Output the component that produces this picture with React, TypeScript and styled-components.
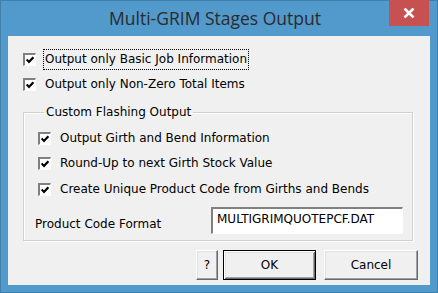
import React from "react";
import styled, { createGlobalStyle } from "styled-components";

const Global = createGlobalStyle`
  html, body { margin: 0; padding: 0; background: #fff; }
  * { box-sizing: border-box; }
`;

const Frame = styled.div`
  width: 438px;
  height: 293px;
  background: #529acb;
  border: 1px solid #3f80ad;
  display: flex;
  flex-direction: column;
  padding: 0 7px 7px;
`;

const TitleBar = styled.div`
  height: 36px;
  flex: none;
  display: grid;
  grid-template-columns: 1fr auto 1fr;
  align-items: start;
  margin: -1px -7px 0;
  padding: 0 8px 0 0;
`;

const Title = styled.div`
  grid-column: 2;
  font-family: "Open Sans", sans-serif;
  font-size: 17.5px;
  line-height: 24px;
  color: #2b2b2b;
  padding-top: 6px;
  white-space: nowrap;
`;

const CloseBtn = styled.div`
  grid-column: 3;
  justify-self: end;
  width: 40px;
  height: 26px;
  background: #c75050;
  display: flex;
  align-items: center;
  justify-content: center;
`;

const Client = styled.div`
  flex: 1;
  background: #f0f0f0;
  padding: 13px 0 0 15px;
  display: flex;
  flex-direction: column;
  font-family: "DejaVu Sans", sans-serif;
  font-size: 12px;
  line-height: 14px;
  color: #000;
`;

const Row = styled.div<{ $gap?: number }>`
  display: flex;
  align-items: center;
  height: 21px;
  flex: none;
  margin-bottom: ${(p) => p.$gap ?? 4}px;
`;

const Box = styled.span`
  display: block;
  width: 13px;
  height: 13px;
  flex: 0 0 13px;
  background: #fff;
  border-style: solid;
  border-width: 2px 1px 1px 2px;
  border-color: #808080 #ffffff #ffffff #808080;
`;

const CheckSvg = styled.svg`
  display: block;
  margin: 1px 0 0 1px;
`;

const Label = styled.span<{ $focus?: boolean }>`
  margin-left: 7px;
  padding: 2px 1px 3px;
  border: 1px dotted ${(p) => (p.$focus ? "#000" : "transparent")};
  white-space: nowrap;
`;

const Group = styled.fieldset`
  margin: 10px 0 0 0;
  width: 390px;
  height: 136px;
  flex: none;
  border: 1px solid #d0d0d0;
  box-shadow: inset 1px 1px 0 #fff, 1px 1px 0 #fff;
  padding: 9px 0 0 14px;
  display: flex;
  flex-direction: column;
`;

const Legend = styled.legend`
  padding: 0 2px;
  margin-left: 6px;
  line-height: 14px;
`;

const FieldRow = styled.div`
  display: flex;
  align-items: flex-end;
  margin-top: 3px;
`;

const FieldLabel = styled.span`
  width: 176px;
  margin-left: -3px;
  padding-bottom: 3px;
`;

const Input = styled.div`
  width: 192px;
  height: 27px;
  background: #fff;
  border-style: solid;
  border-width: 2px 1px 1px 2px;
  border-color: #808080 #ffffff #ffffff #808080;
  padding: 3px 0 0 4px;
`;

const ButtonBar = styled.div`
  display: flex;
  justify-content: flex-end;
  margin-top: 9px;
  padding-right: 12px;
`;

const Button = styled.div<{ $w: number; $default?: boolean; $mr?: number }>`
  width: ${(p) => p.$w}px;
  height: 30px;
  margin-right: ${(p) => p.$mr ?? 0}px;
  background: #f0f0f0;
  border: 1px solid;
  border-color: ${(p) => (p.$default ? "#000" : "#fff #696969 #696969 #fff")};
  box-shadow: ${(p) =>
    p.$default
      ? "inset 1px 1px 0 #fff, inset -1px -1px 0 #696969, inset 2px 2px 0 #e3e3e3, inset -2px -2px 0 #a0a0a0"
      : "inset -1px -1px 0 #a0a0a0, inset 1px 1px 0 #e3e3e3"};
  display: flex;
  align-items: center;
  justify-content: center;
  font-size: 12px;
`;

const Check = () => (
  <CheckSvg width="8" height="8" viewBox="0 0 8 8">
    <path d="M0.6 3.4 L3 5.9 L7.4 1.2" fill="none" stroke="#000" strokeWidth="2.2" />
  </CheckSvg>
);

const CheckRow = ({ text, focus, gap }: { text: string; focus?: boolean; gap?: number }) => (
  <Row $gap={gap}>
    <Box>
      <Check />
    </Box>
    <Label $focus={focus}>{text}</Label>
  </Row>
);

export default function App() {
  return (
    <>
      <Global />
      <Frame>
        <TitleBar>
          <Title>Multi-GRIM Stages Output</Title>
          <CloseBtn>
            <svg width="12" height="10" viewBox="0 0 12 10">
              <path d="M1.5 0.5 L10.5 9.5 M10.5 0.5 L1.5 9.5" stroke="#fff" strokeWidth="2.6" />
            </svg>
          </CloseBtn>
        </TitleBar>
        <Client>
          <CheckRow text="Output only Basic Job Information" focus />
          <CheckRow text="Output only Non-Zero Total Items" gap={0} />
          <Group>
            <Legend>Custom Flashing Output</Legend>
            <CheckRow text="Output Girth and Bend Information" />
            <CheckRow text="Round-Up to next Girth Stock Value" gap={5} />
            <CheckRow text="Create Unique Product Code from Girths and Bends" />
            <FieldRow>
              <FieldLabel>Product Code Format</FieldLabel>
              <Input>MULTIGRIMQUOTEPCF.DAT</Input>
            </FieldRow>
          </Group>
          <ButtonBar>
            <Button $w={22} $mr={5}>?</Button>
            <Button $w={93} $mr={8} $default>OK</Button>
            <Button $w={94}>Cancel</Button>
          </ButtonBar>
        </Client>
      </Frame>
    </>
  );
}
